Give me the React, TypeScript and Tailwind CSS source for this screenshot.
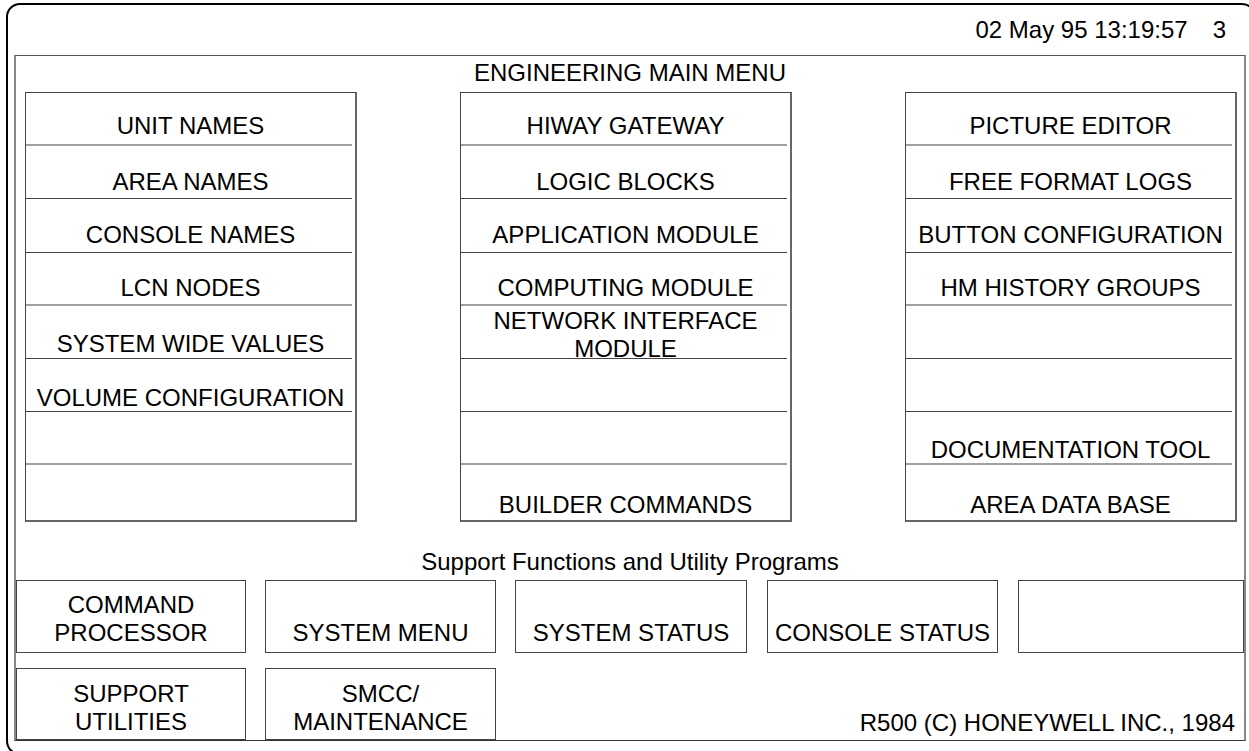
const leftItems = [
  ["UNIT NAMES"],
  ["AREA NAMES"],
  ["CONSOLE NAMES"],
  ["LCN NODES"],
  ["SYSTEM WIDE VALUES"],
  ["VOLUME CONFIGURATION"],
  [],
  [],
];

const midItems = [
  ["HIWAY GATEWAY"],
  ["LOGIC BLOCKS"],
  ["APPLICATION MODULE"],
  ["COMPUTING MODULE"],
  ["NETWORK INTERFACE", "MODULE"],
  [],
  [],
  ["BUILDER COMMANDS"],
];

const rightItems = [
  ["PICTURE EDITOR"],
  ["FREE FORMAT LOGS"],
  ["BUTTON CONFIGURATION"],
  ["HM HISTORY GROUPS"],
  [],
  [],
  ["DOCUMENTATION TOOL"],
  ["AREA DATA BASE"],
];

// per-row geometry: height (incl. divider), text offset, divider look
const rows = [
  { h: "h-[53px]", pt: "pt-[21px]", line: "h-[2px] bg-[#a0a0a0]" },
  { h: "h-[53px]", pt: "pt-[24px]", line: "h-px bg-[#444]" },
  { h: "h-[54px]", pt: "pt-[24px]", line: "h-px bg-[#444]" },
  { h: "h-[53px]", pt: "pt-[23px]", line: "h-[2px] bg-[#a0a0a0]" },
  { h: "h-[53px]", pt: "pt-[26px]", line: "h-px bg-[#444]" },
  { h: "h-[53px]", pt: "pt-[27px]", line: "h-px bg-[#444]" },
  { h: "h-[53px]", pt: "pt-[26px]", line: "h-[2px] bg-[#a0a0a0]" },
  { h: "flex-1", pt: "pt-[28px]", line: "" },
];

const MenuColumn = ({ items, className }: { items: string[][]; className: string }) => (
  <div className={`flex h-[430px] w-[332px] flex-col border border-[#444] border-r-2 border-b-2 border-r-[#666] border-b-[#666] ${className}`}>
    {rows.map((row, i) => {
      const lines = items[i];
      return (
        <div key={i} className={`flex min-h-0 flex-col ${row.h}`}>
          <div
            className={`min-h-0 flex-1 whitespace-nowrap text-center ${
              lines.length > 1 ? "pt-[1px] leading-[28px]" : `${row.pt} leading-[24px]`
            }`}
          >
            {lines.map((l) => (
              <div key={l}>{l}</div>
            ))}
          </div>
          {row.line && <div className={`mr-[3px] shrink-0 ${row.line}`} />}
        </div>
      );
    })}
  </div>
);

const SupportBox = ({
  lines,
  className,
  pb,
}: {
  lines: string[];
  className: string;
  pb: string;
}) => (
  <div className={`flex flex-col justify-end border border-[#444] text-center leading-[28px] ${pb} ${className}`}>
    {lines.map((l) => (
      <div key={l} className="whitespace-nowrap">
        {l}
      </div>
    ))}
  </div>
);

export default function App() {
  return (
    <div className="h-[751px] w-[1249px] overflow-hidden bg-white font-['Liberation_Sans',Arial,sans-serif] text-[24px] text-black">
      <div className="ml-[6px] mt-[3px] flex h-[752px] w-[1250px] flex-col rounded-[14px] border-2 border-black">
        {/* status line */}
        <div className="flex h-[50px] w-[1239px] justify-end pr-[21px] pt-[13px] leading-[24px]">
          <span>02 May 95 13:19:57</span>
          <span className="ml-[25px]">3</span>
        </div>

        {/* main frame */}
        <div className="ml-[6px] flex h-[686px] w-[1232px] flex-col border-b border-l-2 border-r-2 border-t border-b-[#333] border-l-[#888] border-r-[#888] border-t-[#555]">
          <div className="h-[36px] pt-[5px] text-center leading-[24px]">ENGINEERING MAIN MENU</div>

          <div className="flex">
            <MenuColumn items={leftItems} className="ml-[9px]" />
            <MenuColumn items={midItems} className="ml-[103px]" />
            <MenuColumn items={rightItems} className="ml-[113px]" />
          </div>

          <div className="h-[58px] pt-[28px] text-center leading-[24px]">
            Support Functions and Utility Programs
          </div>

          <div className="flex h-[73px]">
            <SupportBox lines={["COMMAND", "PROCESSOR"]} pb="pb-[5px]" className="w-[230px]" />
            <SupportBox lines={["SYSTEM MENU"]} pb="pb-[5px]" className="ml-[19px] w-[231px]" />
            <SupportBox lines={["SYSTEM STATUS"]} pb="pb-[5px]" className="ml-[19px] w-[232px]" />
            <SupportBox lines={["CONSOLE STATUS"]} pb="pb-[5px]" className="ml-[20px] w-[231px]" />
            <SupportBox lines={[]} pb="pb-[5px]" className="ml-[20px] flex-1" />
          </div>

          <div className="mt-[15px] flex h-[72px]">
            <SupportBox lines={["SUPPORT", "UTILITIES"]} pb="pb-[3px]" className="w-[230px]" />
            <SupportBox lines={["SMCC/", "MAINTENANCE"]} pb="pb-[3px]" className="ml-[19px] w-[231px]" />
            <div className="flex flex-1 items-end justify-end pb-[3px] pr-[9px] leading-[28px]">
              R500 (C) HONEYWELL INC., 1984
            </div>
          </div>
        </div>
      </div>
    </div>
  );
}
